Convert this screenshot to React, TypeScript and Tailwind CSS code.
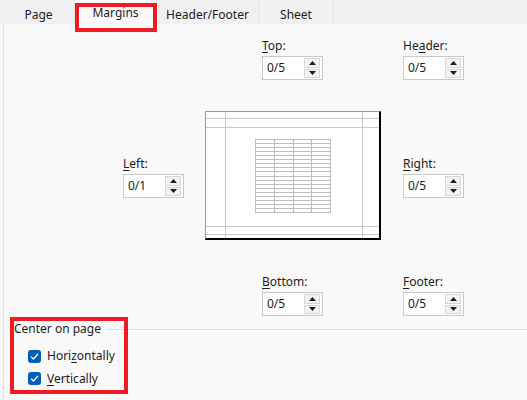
import React from "react";

function Arrow({ up }: { up?: boolean }) {
  return (
    <svg width="7" height="4" viewBox="0 0 7 4">
      {up ? <path d="M0 4 L3.5 0 L7 4 Z" fill="#1b1b1b" /> : <path d="M0 0 L7 0 L3.5 4 Z" fill="#1b1b1b" />}
    </svg>
  );
}

function Spin({ v }: { v: string }) {
  return (
    <div className="flex w-[61px] h-[24px] border border-[#c8c8c8] bg-white">
      <div className="flex-1 pl-[4px] flex items-center text-[#1b1b1b]">{v}</div>
      <div className="w-[18px] flex flex-col gap-[1px] py-[1px] pr-[2px]">
        <div className="flex-1 bg-[#f3f3f3] border border-[#d6d6d6] flex items-center justify-center">
          <Arrow up />
        </div>
        <div className="flex-1 bg-[#f3f3f3] border border-[#d6d6d6] flex items-center justify-center">
          <Arrow />
        </div>
      </div>
    </div>
  );
}

function Field({ label, u, className = "" }: { label: [string, string, string]; u?: boolean; className?: string }) {
  return (
    <div className={"flex flex-col w-[61px] " + className}>
      <div className="h-[16px] leading-[16px] whitespace-nowrap">
        {label[0]}
        <span className="underline underline-offset-[2px]">{label[1]}</span>
        {label[2]}
      </div>
      <div className="mt-[2px]">
        <Spin v={u ? "0/1" : "0/5"} />
      </div>
    </div>
  );
}

function Preview() {
  const rows = 18;
  const gx0 = 49, gx1 = 124, gy0 = 27, gy1 = 100;
  const cols = [0, 1, 2, 3, 4].map((i) => gx0 + ((gx1 - gx0) * i) / 4);
  const rs = Array.from({ length: rows + 1 }, (_, i) => gy0 + ((gy1 - gy0) * i) / rows);
  return (
    <div className="w-[176px] h-[129px] bg-white border-t border-l border-[#9a9a9a] border-r-2 border-b-2 border-r-black border-b-black">
      <svg width="173" height="126" viewBox="0 0 173 126" className="block">
        <g stroke="#c8c8c8" strokeWidth="1" shapeRendering="crispEdges">
          <line x1="19.5" y1="0" x2="19.5" y2="126" />
          <line x1="156.5" y1="0" x2="156.5" y2="126" />
          <line x1="0" y1="6.5" x2="173" y2="6.5" />
          <line x1="0" y1="15.5" x2="173" y2="15.5" />
          <line x1="0" y1="114.5" x2="173" y2="114.5" />
          <line x1="0" y1="122.5" x2="173" y2="122.5" />
        </g>
        <g stroke="#bdbdbd" strokeWidth="1" shapeRendering="crispEdges">
          {cols.map((x, i) => (
            <line key={"c" + i} x1={Math.round(x) + 0.5} y1={gy0} x2={Math.round(x) + 0.5} y2={gy1} />
          ))}
          {rs.map((y, i) => (
            <line key={"r" + i} x1={gx0} y1={Math.round(y) + 0.5} x2={gx1 + 1} y2={Math.round(y) + 0.5} />
          ))}
        </g>
      </svg>
    </div>
  );
}

function Check() {
  return (
    <div className="w-[13px] h-[13px] rounded-[3px] bg-[#005fb8] flex items-center justify-center">
      <svg width="9" height="7" viewBox="0 0 9 7">
        <path d="M1 3.6 L3.4 6 L8 1" stroke="white" strokeWidth="1.3" fill="none" />
      </svg>
    </div>
  );
}

export default function App() {
  const tabs: { t: string; w: string; sel?: boolean }[] = [
    { t: "Page", w: "w-[72px]" },
    { t: "Margins", w: "w-[82px]", sel: true },
    { t: "Header/Footer", w: "w-[102px]" },
    { t: "Sheet", w: "w-[75px]" },
  ];
  return (
    <div className="relative w-[527px] h-[400px] overflow-hidden bg-[#f9f9f9] text-[12px] text-[#1b1b1b] font-['Noto_Sans',sans-serif]">
      <div className="flex h-[24px] bg-[#f0f0f0] pl-[3px]">
        {tabs.map((tb) => (
          <div
            key={tb.t}
            className={
              tb.w +
              " flex justify-center border-r border-[#e2e2e2] " +
              (tb.sel ? "bg-[#f9f9f9] pt-[5px]" : "pt-[7px]")
            }
          >
            <span className="leading-[16px] h-[16px]">{tb.t}</span>
          </div>
        ))}
      </div>
      <div className="ml-[3px] border-l border-[#e2e2e2] h-[376px]">
        <div className="flex pt-[14px] pl-[258px] gap-[80px]">
          <Field label={["", "T", "op:"]} />
          <Field label={["He", "a", "der:"]} />
        </div>
        <div className="flex items-start mt-[31px] pl-[119px]">
          <Field label={["", "L", "eft:"]} u className="mt-[45px]" />
          <div className="ml-[21px]">
            <Preview />
          </div>
          <Field label={["", "R", "ight:"]} className="mt-[45px] ml-[22px]" />
        </div>
        <div className="flex mt-[34px] pl-[258px] gap-[80px]">
          <Field label={["", "B", "ottom:"]} />
          <Field label={["", "F", "ooter:"]} />
        </div>
        <div className="flex items-center mt-[5px] pl-[10px] h-[16px]">
          <span className="leading-[16px] whitespace-nowrap">Center on page</span>
          <div className="flex-1 h-px bg-[#e0e0e0] ml-[6px]" />
        </div>
        <div className="mt-[8px] pl-[24px] flex flex-col">
          <div className="h-[22px] flex items-center gap-[6px]">
            <Check />
            <span>
              Hori<span className="underline underline-offset-[2px]">z</span>ontally
            </span>
          </div>
          <div className="h-[23px] flex items-center gap-[6px]">
            <Check />
            <span>
              <span className="underline underline-offset-[2px]">V</span>ertically
            </span>
          </div>
        </div>
      </div>
      <div className="absolute left-[75px] top-[3px] w-[82px] h-[29px] border-4 border-[#ed1c24]" />
      <div className="absolute left-[10px] top-[317px] w-[118px] h-[77px] border-4 border-[#ed1c24]" />
    </div>
  );
}
